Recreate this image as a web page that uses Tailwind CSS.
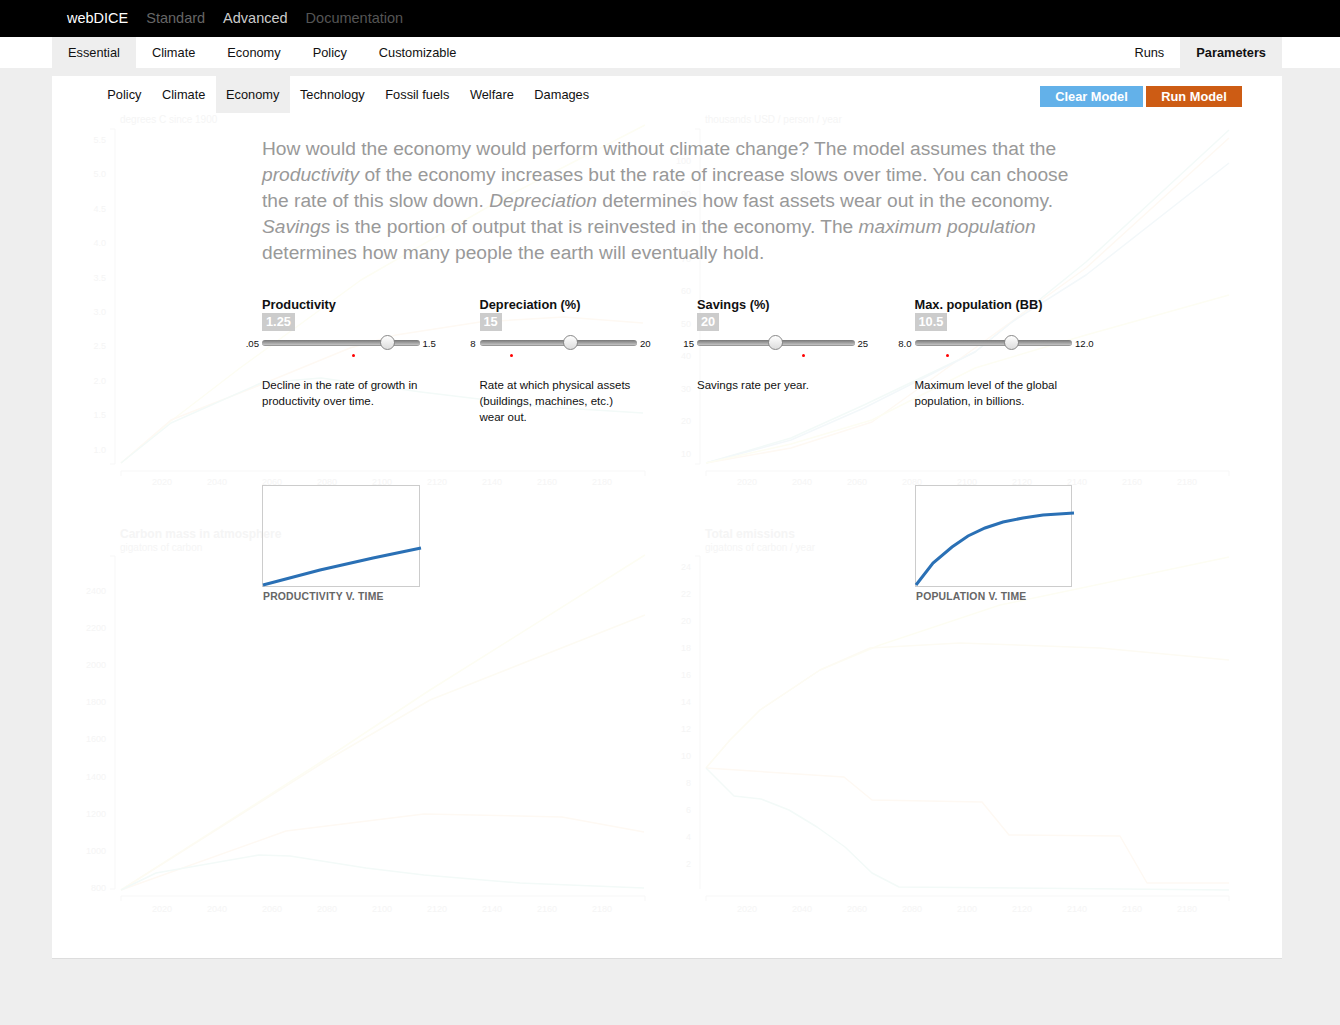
<!DOCTYPE html>
<html lang="en">
<head>
    <meta charset="UTF-8">
    <title>webDICE</title>
    <script src="https://cdn.jsdelivr.net/npm/@tailwindcss/browser@4"></script>
</head>
<body class="bg-[#eeeeee] font-['Liberation_Sans',Arial,sans-serif] text-[12.8px] text-[#111]">
<div class="min-h-[1025px]">
    <!-- Top bar -->
    <header class="h-[37px] bg-black flex items-center pl-[67px] gap-[18px] text-[14.5px]">
        <a class="text-white">webDICE</a>
        <a class="text-[#666]">Standard</a>
        <a class="text-[#ccc]">Advanced</a>
        <a class="text-[#555]">Documentation</a>
    </header>

    <!-- Main tabs -->
    <nav class="h-[31px] bg-white pl-[52px] pr-[58px] flex items-stretch">
        <a class="px-4 flex items-center bg-[#eeeeee]">Essential</a>
        <a class="px-4 flex items-center">Climate</a>
        <a class="px-4 flex items-center">Economy</a>
        <a class="px-4 flex items-center">Policy</a>
        <a class="px-4 flex items-center">Customizable</a>
        <a class="px-4 flex items-center ml-auto">Runs</a>
        <a class="px-4 flex items-center bg-[#eeeeee] font-bold">Parameters</a>
    </nav>

    <!-- Card -->
    <main class="relative mt-2 mx-[52px] w-[1230px] h-[883px] bg-white border-b border-[#dddddd]">
        <!-- Faded result charts behind the form -->
        <svg id="bgCharts" class="absolute inset-0" width="1230" height="882" viewBox="52 76 1230 882" fill="none">
            <g stroke-width="1.5" stroke-linejoin="round">
                <!-- degrees -->
                <polyline stroke="#fdfdf3" points="121,463 171,421 240,368 361,280 500,200 645,125"/>
                <polyline stroke="#fef9f3" points="121,463 171,420 260,385 350,348 396,335 480,322 564,317 643,323"/>
                <polyline stroke="#f3faf8" points="121,463 171,423 261,383 321,378 421,392 546,407 643,413"/>
                <!-- income -->
                <polyline stroke="#f3faf8" points="706,463 791,438 864,405 975,352 1086,262 1229,130"/>
                <polyline stroke="#fef9f3" points="706,463 791,448 872,422 975,348 1086,268 1229,138"/>
                <polyline stroke="#f3f8fa" points="706,463 791,440 864,408 975,352 1012,322 1086,275 1229,163"/>
                <polyline stroke="#fdfdf3" points="706,463 791,444 872,420 975,368 1086,335 1229,295"/>
                <!-- carbon -->
                <polyline stroke="#fdfdf3" points="121,890 324,760 430,690 645,555"/>
                <polyline stroke="#fdfbf3" points="121,890 324,762 430,700 645,615"/>
                <polyline stroke="#fef9f3" points="121,890 286,831 424,814 562,817 644,832"/>
                <polyline stroke="#f3faf8" points="121,890 156,873 259,855 290,856 366,868 424,875 520,883 644,888"/>
                <!-- emissions -->
                <polyline stroke="#fdfdf3" points="706,768 730,740 760,710 820,670 880,645 1000,605 1229,557"/>
                <polyline stroke="#fdfbf3" points="706,768 730,740 760,710 820,670 870,648 960,643 1100,648 1229,660"/>
                <polyline stroke="#fef9f3" points="706,768 844,777 872,800 982,802 1009,835 1120,836 1147,883 1229,883"/>
                <polyline stroke="#f3faf8" points="706,768 734,796 761,799 789,810 817,827 845,847 872,873 899,887 1229,890"/>
            </g>
            <g stroke="#f7f7f7">
                <path d="M110 129H115V464H110M700 464H695"/>
                <path d="M121 476V471H645V476M706 476V471H1229V476"/>
                <path d="M695 129H700V464"/>
                <path d="M110 556H115V889H110"/>
                <path d="M695 556H700V889"/>
                <path d="M121 901V896H645V901M706 901V896H1229V901"/>
            </g>
            <g id="bgLabels" fill="#f5f5f5" font-size="9"></g>
            <g fill="#f5f5f5" font-size="10">
                <text x="120" y="123">degrees C since 1900</text>
                <text x="705" y="123">thousands USD / person / year</text>
                <text x="120" y="551">gigatons of carbon</text>
                <text x="705" y="551">gigatons of carbon / year</text>
                <text x="120" y="538" font-size="12" font-weight="700">Carbon mass in atmosphere</text>
                <text x="705" y="538" font-size="12" font-weight="700">Total emissions</text>
            </g>
        </svg>

        <div class="relative">
            <!-- Sub tabs + actions -->
            <div class="flex items-start pl-[45px] pr-[40px] h-[37px]">
                <a class="h-[37px] px-[10.3px] flex items-center">Policy</a>
                <a class="h-[37px] px-[10.3px] flex items-center">Climate</a>
                <a class="h-[37px] px-[10.3px] flex items-center bg-[#eeeeee]">Economy</a>
                <a class="h-[37px] px-[10.3px] flex items-center">Technology</a>
                <a class="h-[37px] px-[10.3px] flex items-center">Fossil fuels</a>
                <a class="h-[37px] px-[10.3px] flex items-center">Welfare</a>
                <a class="h-[37px] px-[10.3px] flex items-center">Damages</a>
                <div class="ml-auto mt-[10px] flex gap-[3px] font-bold text-white">
                    <button class="w-[103px] h-[21px] bg-[#63b1e9]">Clear Model</button>
                    <button class="w-[96px] h-[21px] bg-[#cd5c14]">Run Model</button>
                </div>
            </div>

            <p class="ml-[210px] mt-[23px] w-[820px] text-[19.2px] leading-[26px] text-[#999]">
                How would the economy would perform without climate change? The model assumes that the
                <em>productivity</em> of the economy increases but the rate of increase slows over time. You can choose
                the rate of this slow down. <em>Depreciation</em> determines how fast assets wear out in the economy.
                <em>Savings</em> is the portion of output that is reinvested in the economy. The <em>maximum population</em>
                determines how many people the earth will eventually hold.
            </p>

            <!-- Sliders -->
            <section class="ml-[210px] mt-[31px] grid grid-cols-[217.5px_217.5px_217.5px_217.5px]">
                <div class="w-[157.5px]">
                    <h3 class="font-bold leading-[16px]">Productivity</h3>
                    <div class="inline-block align-top h-[18px] px-[4px] bg-[#cccccc] text-white font-bold text-[12.8px] leading-[18px]">1.25</div>
                    <div class="relative mt-[8px] h-[6px] rounded-full bg-linear-to-b from-[#777] to-[#c4c4c4] border-b border-[#999]">
                        <span class="absolute right-full mr-[3px] -top-[2px] text-[9.6px] leading-[12px]">.05</span>
                        <span class="absolute left-full ml-[3px] -top-[2px] text-[9.6px] leading-[12px]">1.5</span>
                        <span class="absolute left-[118px] -top-[5px] size-[15px] rounded-full border border-[#888] bg-linear-to-b from-white to-[#dddddd]"></span>
                        <span class="absolute left-[90px] top-[14px] size-[3px] rounded-full bg-[#f00]"></span>
                    </div>
                    <p class="mt-[31px] w-[159px] text-[11.5px] leading-[16px]">Decline in the rate of growth in productivity over time.</p>
                </div>
                <div class="w-[157.5px]">
                    <h3 class="font-bold leading-[16px]">Depreciation (%)</h3>
                    <div class="inline-block align-top h-[18px] px-[4px] bg-[#cccccc] text-white font-bold text-[12.8px] leading-[18px]">15</div>
                    <div class="relative mt-[8px] h-[6px] rounded-full bg-linear-to-b from-[#777] to-[#c4c4c4] border-b border-[#999]">
                        <span class="absolute right-full mr-[4px] -top-[2px] text-[9.6px] leading-[12px]">8</span>
                        <span class="absolute left-full ml-[3px] -top-[2px] text-[9.6px] leading-[12px]">20</span>
                        <span class="absolute left-[83px] -top-[5px] size-[15px] rounded-full border border-[#888] bg-linear-to-b from-white to-[#dddddd]"></span>
                        <span class="absolute left-[30px] top-[14px] size-[3px] rounded-full bg-[#f00]"></span>
                    </div>
                    <p class="mt-[31px] w-[159px] text-[11.5px] leading-[16px]">Rate at which physical assets (buildings, machines, etc.) wear out.</p>
                </div>
                <div class="w-[157.5px]">
                    <h3 class="font-bold leading-[16px]">Savings (%)</h3>
                    <div class="inline-block align-top h-[18px] px-[4px] bg-[#cccccc] text-white font-bold text-[12.8px] leading-[18px]">20</div>
                    <div class="relative mt-[8px] h-[6px] rounded-full bg-linear-to-b from-[#777] to-[#c4c4c4] border-b border-[#999]">
                        <span class="absolute right-full mr-[3px] -top-[2px] text-[9.6px] leading-[12px]">15</span>
                        <span class="absolute left-full ml-[3px] -top-[2px] text-[9.6px] leading-[12px]">25</span>
                        <span class="absolute left-[71px] -top-[5px] size-[15px] rounded-full border border-[#888] bg-linear-to-b from-white to-[#dddddd]"></span>
                        <span class="absolute left-[105px] top-[14px] size-[3px] rounded-full bg-[#f00]"></span>
                    </div>
                    <p class="mt-[31px] w-[159px] text-[11.5px] leading-[16px]">Savings rate per year.</p>
                </div>
                <div class="w-[157.5px]">
                    <h3 class="font-bold leading-[16px]">Max. population (BB)</h3>
                    <div class="inline-block align-top h-[18px] px-[4px] bg-[#cccccc] text-white font-bold text-[12.8px] leading-[18px]">10.5</div>
                    <div class="relative mt-[8px] h-[6px] rounded-full bg-linear-to-b from-[#777] to-[#c4c4c4] border-b border-[#999]">
                        <span class="absolute right-full mr-[3px] -top-[2px] text-[9.6px] leading-[12px]">8.0</span>
                        <span class="absolute left-full ml-[3px] -top-[2px] text-[9.6px] leading-[12px]">12.0</span>
                        <span class="absolute left-[89px] -top-[5px] size-[15px] rounded-full border border-[#888] bg-linear-to-b from-white to-[#dddddd]"></span>
                        <span class="absolute left-[31px] top-[14px] size-[3px] rounded-full bg-[#f00]"></span>
                    </div>
                    <p class="mt-[31px] w-[159px] text-[11.5px] leading-[16px]">Maximum level of the global population, in billions.</p>
                </div>
            </section>

            <!-- Mini charts -->
            <section class="ml-[210px] mt-[60px] w-[810px] flex justify-between">
                <figure class="w-[158px]">
                    <div class="h-[102px] border border-[#cccccc]">
                        <svg class="block overflow-visible" width="156" height="100" viewBox="263 486 156 100" fill="none">
                            <polyline stroke="#2a70b5" stroke-width="3" points="263,585 320,570 373,558 421,548"/>
                        </svg>
                    </div>
                    <figcaption class="mt-[3px] ml-[1px] text-[10.4px] leading-[13px] font-bold text-[#666] tracking-[0.2px]">PRODUCTIVITY V. TIME</figcaption>
                </figure>
                <figure class="w-[157px]">
                    <div class="h-[102px] border border-[#cccccc]">
                        <svg class="block overflow-visible" width="155" height="100" viewBox="916 486 155 100" fill="none">
                            <polyline stroke="#2a70b5" stroke-width="3" points="916,585 933,563 952,547 968,536 985,528 1003,522 1023,518 1043,515 1074,513"/>
                        </svg>
                    </div>
                    <figcaption class="mt-[3px] ml-[1px] text-[10.4px] leading-[13px] font-bold text-[#666] tracking-[0.2px]">POPULATION V. TIME</figcaption>
                </figure>
            </section>
        </div>
    </main>
</div>
<script>
    // axis labels of the faded charts
    var years = [2020, 2040, 2060, 2080, 2100, 2120, 2140, 2160, 2180];
    var out = '';
    function label(x, y, t, anchor) {
        out += '<text x="' + x + '" y="' + y + '" text-anchor="' + anchor + '">' + t + '</text>';
    }
    years.forEach(function (yr, i) {
        label(162 + 55 * i, 485, yr, 'middle');
        label(747 + 55 * i, 485, yr, 'middle');
        label(162 + 55 * i, 912, yr, 'middle');
        label(747 + 55 * i, 912, yr, 'middle');
    });
    ['5.5', '5.0', '4.5', '4.0', '3.5', '3.0', '2.5', '2.0', '1.5', '1.0'].forEach(function (t, i) {
        label(106, 143 + 34.4 * i, t, 'end');
    });
    [100, 90, 80, 70, 60, 50, 40, 30, 20, 10].forEach(function (t, i) {
        label(691, 164 + 32.5 * i, t, 'end');
    });
    [2400, 2200, 2000, 1800, 1600, 1400, 1200, 1000, 800].forEach(function (t, i) {
        label(106, 594 + 37.1 * i, t, 'end');
    });
    [24, 22, 20, 18, 16, 14, 12, 10, 8, 6, 4, 2].forEach(function (t, i) {
        label(691, 570 + 27 * i, t, 'end');
    });
    document.getElementById('bgLabels').innerHTML = out;
</script>
</body>
</html>
